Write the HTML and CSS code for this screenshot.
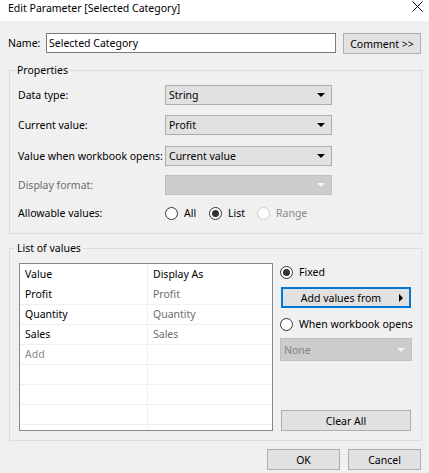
FILE: index.html
```html
<!DOCTYPE html>
<html lang="en">
<head>
    <meta charset="UTF-8">
    <meta name="viewport" content="width=device-width, initial-scale=1.0">
    <title>Edit Parameter</title>
    <link rel="stylesheet" href="styles.css">
</head>
<body>
    <div class="titlebar">
        <span class="title">Edit Parameter [Selected Category]</span>
        <svg class="close" width="11" height="11" viewBox="0 0 11 11">
            <path d="M0.5 0.5 L10.5 10.5 M10.5 0.5 L0.5 10.5" stroke="#000" stroke-width="1" fill="none"/>
        </svg>
    </div>

    <div class="dialog">
        <div class="name-row">
            <span class="name-label">Name:</span>
            <div class="textbox">Selected Category</div>
            <button class="btn comment-btn">Comment &gt;&gt;</button>
        </div>

        <fieldset class="group props">
            <legend>Properties</legend>
            <div class="prop-row">
                <span class="prop-label">Data type:</span>
                <div class="combo"><span>String</span><span class="arrow"></span></div>
            </div>
            <div class="prop-row">
                <span class="prop-label">Current value:</span>
                <div class="combo"><span>Profit</span><span class="arrow"></span></div>
            </div>
            <div class="prop-row">
                <span class="prop-label">Value when workbook opens:</span>
                <div class="combo"><span>Current value</span><span class="arrow"></span></div>
            </div>
            <div class="prop-row">
                <span class="prop-label disabled">Display format:</span>
                <div class="combo off"><span></span><span class="arrow"></span></div>
            </div>
            <div class="prop-row radios">
                <span class="prop-label">Allowable values:</span>
                <label class="radio opt-all"><span class="dot"></span>All</label>
                <label class="radio opt-list"><span class="dot checked"></span>List</label>
                <label class="radio off"><span class="dot"></span>Range</label>
            </div>
        </fieldset>

        <fieldset class="group values">
            <legend>List of values</legend>
            <div class="values-body">
                <div class="grid">
                    <div class="row head"><div class="cell">Value</div><div class="cell">Display As</div></div>
                    <div class="row"><div class="cell">Profit</div><div class="cell muted">Profit</div></div>
                    <div class="row"><div class="cell">Quantity</div><div class="cell muted">Quantity</div></div>
                    <div class="row"><div class="cell">Sales</div><div class="cell muted">Sales</div></div>
                    <div class="row"><div class="cell faint">Add</div><div class="cell"></div></div>
                    <div class="row"><div class="cell"></div><div class="cell"></div></div>
                    <div class="row"><div class="cell"></div><div class="cell"></div></div>
                    <div class="row"><div class="cell"></div><div class="cell"></div></div>
                    <div class="row"><div class="cell"></div><div class="cell"></div></div>
                </div>
                <div class="side">
                    <label class="radio side-radio"><span class="dot checked"></span>Fixed</label>
                    <button class="btn add-btn"><span>Add values from</span><span class="right-arrow"></span></button>
                    <label class="radio side-radio when"><span class="dot"></span>When workbook opens</label>
                    <div class="combo off none-combo"><span>None</span><span class="arrow"></span></div>
                    <button class="btn clear-btn">Clear All</button>
                </div>
            </div>
        </fieldset>

        <div class="footer">
            <button class="btn footer-btn">OK</button>
            <button class="btn footer-btn">Cancel</button>
        </div>
    </div>
</body>
</html>
```

FILE: styles.css
```css
body {
    margin: 0;
    background-color: #f0f0f0;
    font-family: "Noto Sans", Arial, sans-serif;
    font-size: 10.5px;
    color: #000;
    white-space: nowrap;
}

.titlebar {
    height: 21px;
    background-color: #fff;
    display: flex;
    justify-content: space-between;
    align-items: flex-start;
    padding: 0 6px 0 8px;
}

.title {
    line-height: 16px;
}

.close {
    margin-top: 1px;
}

.dialog {
    padding: 12px 7px 0 8px;
}

.name-row {
    display: flex;
    align-items: flex-start;
}

.name-label {
    width: 38px;
    line-height: 20px;
}

.textbox {
    width: 290px;
    height: 20px;
    box-sizing: border-box;
    border: 1px solid #7a7a7a;
    background-color: #fff;
    padding: 0 2px;
    line-height: 18px;
}

.btn {
    font: inherit;
    color: #000;
    background-color: #e1e1e1;
    border: 1px solid #adadad;
    height: 21px;
    padding: 0;
    box-sizing: border-box;
    border-radius: 0;
}

.comment-btn {
    width: 78px;
    margin-left: 7px;
}

.group {
    margin: 8px 0 0 1px;
    border: 1px solid #dcdcdc;
    padding: 7px 8px 11px 8px;
    min-width: 0;
}

.group legend {
    padding: 0 2px;
    margin-left: -3px;
    line-height: 16px;
}

.values {
    margin-top: 6px;
    padding-bottom: 9px;
}

.prop-row {
    display: flex;
    align-items: center;
    margin-top: 10px;
}

.prop-row:first-of-type {
    margin-top: 0;
}

.prop-row:nth-of-type(3) {
    margin-top: 11px;
}

.prop-row:nth-of-type(4) {
    margin-top: 9px;
}

.prop-label {
    width: 147px;
}

.disabled {
    color: #6d6d6d;
}

.combo {
    width: 167px;
    height: 20px;
    box-sizing: border-box;
    border: 1px solid #adadad;
    background-color: #e1e1e1;
    display: flex;
    align-items: center;
    justify-content: space-between;
    padding: 0 6px 0 3px;
}

.arrow {
    width: 0;
    height: 0;
    border-left: 4px solid transparent;
    border-right: 4px solid transparent;
    border-top: 4px solid #000;
}

.combo.off {
    background-color: #cccccc;
    border-color: #bfbfbf;
    color: #838383;
}

.combo.off .arrow {
    border-top-color: #f4f4f4;
}

.radios {
    margin-top: 9px;
    height: 18px;
}

.radio {
    display: flex;
    align-items: center;
}

.dot {
    width: 13px;
    height: 13px;
    box-sizing: border-box;
    border: 1px solid #333;
    border-radius: 50%;
    background-color: #fff;
    margin-right: 6px;
    display: flex;
    align-items: center;
    justify-content: center;
}

.dot.checked::after {
    content: "";
    width: 7px;
    height: 7px;
    border-radius: 50%;
    background-color: #333;
}

.opt-all {
    width: 44px;
}

.opt-list {
    width: 48px;
}

.radio.off {
    color: #8a8a8a;
}

.radio.off .dot {
    border-color: #cccccc;
}

.values-body {
    display: flex;
    align-items: stretch;
}

.grid {
    width: 254px;
    height: 168px;
    box-sizing: border-box;
    margin-left: 1px;
    border: 1px solid #828790;
    background-color: #fff;
    overflow: hidden;
}

.row {
    display: grid;
    grid-template-columns: 128px 1fr;
    height: 20px;
    box-sizing: border-box;
    border-bottom: 1px solid #f0f0f0;
}

.row.head {
    height: 21px;
    border-bottom: none;
}

.cell {
    padding-left: 5px;
    line-height: 19px;
}

.head .cell {
    line-height: 21px;
}

.cell:first-child {
    border-right: 1px solid #f0f0f0;
}

.muted {
    color: #6d6d6d;
}

.faint {
    color: #8a8a8a;
}

.side {
    width: 132px;
    margin-left: 7px;
    display: flex;
    flex-direction: column;
    align-items: flex-start;
}

.side-radio {
    margin-top: 1px;
    height: 16px;
}

.add-btn {
    width: 130px;
    margin: 7px 0 0 1px;
    border: 2px solid #0078d7;
    display: flex;
    align-items: center;
    padding: 0 6px 0 0;
}

.add-btn span:first-child {
    flex: 1;
    text-align: center;
}

.right-arrow {
    width: 0;
    height: 0;
    border-top: 4px solid transparent;
    border-bottom: 4px solid transparent;
    border-left: 4px solid #000;
}

.when {
    margin-top: 8px;
}

.none-combo {
    width: 132px;
    height: 23px;
    margin-top: 6px;
}

.clear-btn {
    width: 130px;
    margin: auto 0 0 1px;
}

.footer {
    display: flex;
    justify-content: flex-end;
    gap: 8px;
    margin: 8px 1px 0 0;
}

.footer-btn {
    width: 73px;
}
```
